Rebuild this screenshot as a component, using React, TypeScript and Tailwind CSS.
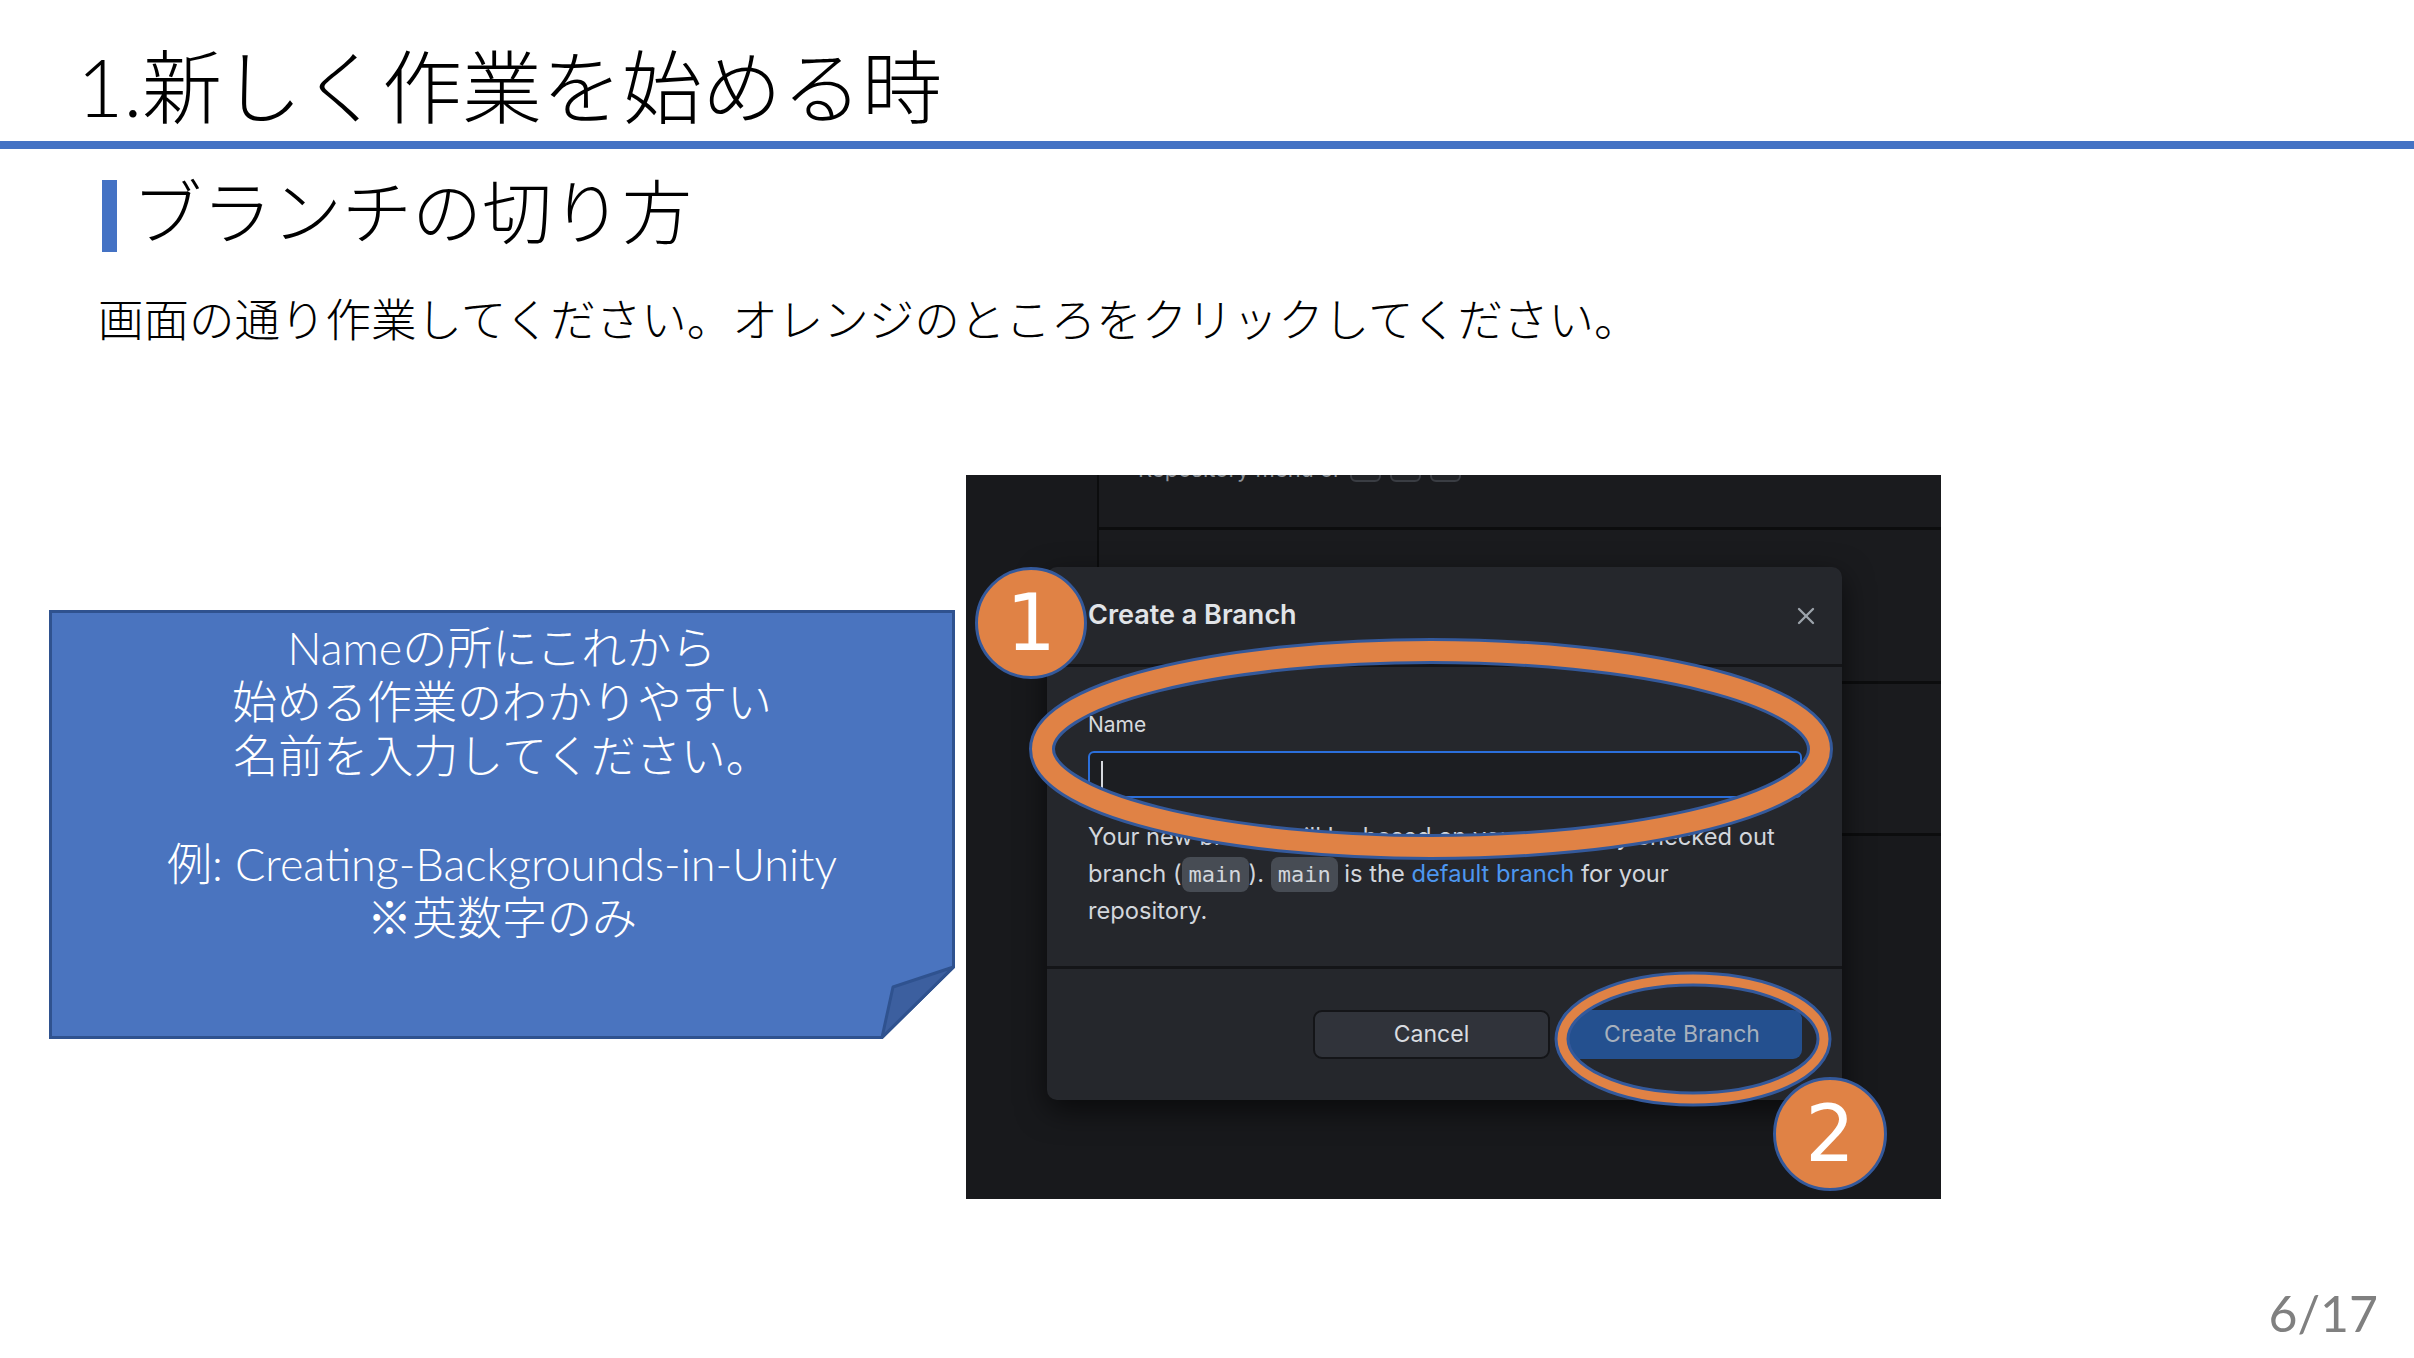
import React from "react";
import { X } from "lucide-react";

function Callout() {
  return (
    <div className="relative mt-[135px] h-[429px] w-[906px] shrink-0">
      <svg className="absolute inset-0" width="906" height="429" viewBox="0 0 906 429">
        <polygon
          points="1.5,1.5 904.5,1.5 904.5,357 833,427.5 1.5,427.5"
          fill="#4a74bf"
          stroke="#2f528f"
          strokeWidth="3"
        />
        <polygon
          points="904.5,357 833,427.5 844,377"
          fill="#3c5f9f"
          stroke="#2f528f"
          strokeWidth="3"
          strokeLinejoin="round"
        />
      </svg>
      <div className="relative pt-[11px] text-center text-[45px] leading-[54px] font-light text-white">
        <p>Nameの所にこれから</p>
        <p>始める作業のわかりやすい</p>
        <p>名前を入力してください。</p>
        <p>&nbsp;</p>
        <p>例: Creating-Backgrounds-in-Unity</p>
        <p>※英数字のみ</p>
      </div>
    </div>
  );
}

function Kbd({ children }: { children: React.ReactNode }) {
  return (
    <span className="inline-flex h-[30px] w-[31px] items-center justify-center rounded-[6px] border-2 border-[#3a3d43] bg-[#222428] text-[18px] text-[#9aa0a7]">
      {children}
    </span>
  );
}

function Modal() {
  return (
    <div className="absolute left-[81px] top-[92px] flex h-[533px] w-[795px] flex-col rounded-[10px] bg-[#25272c] shadow-[0_10px_30px_rgba(0,0,0,0.6)]">
      <div className="flex h-[100px] items-center justify-between border-b-[3px] border-[#141518] pl-[41px] pr-[22px]">
        <h3 className="text-[27px] font-semibold text-[#e1e4e8]">Create a Branch</h3>
        <X size={28} strokeWidth={2} className="text-[#9ca3ab]" />
      </div>
      <div className="h-[302px] border-b-[3px] border-[#141518] pl-[41px] pr-[40px] pt-[45px]">
        <label className="block text-[21px] leading-[26px] text-[#d6d9de]">Name</label>
        <div className="mt-[13px] flex h-[47px] items-center rounded-[6px] border-2 border-[#2b6fdb] bg-[#1c1e22] pl-[11px]">
          <span className="h-[27px] w-[2px] bg-[#d6d9de]" />
        </div>
        <p className="mt-[21px] text-[23.7px] leading-[36.5px] text-[#d2d6dc]">
          Your new branch will be based on your currently checked out
          <br />
          branch (
          <code className="rounded-[8px] bg-[#474c54] px-[7px] py-[5px] font-['DejaVu_Sans_Mono',monospace] text-[22px]">main</code>
          ).{" "}
          <code className="rounded-[8px] bg-[#474c54] px-[7px] py-[5px] font-['DejaVu_Sans_Mono',monospace] text-[22px]">main</code>{" "}
          is the <span className="text-[#4d97f0]">default branch</span> for your
          <br />
          repository.
        </p>
      </div>
      <div className="flex flex-1 items-center justify-end gap-[12px] pr-[40px]">
        <button className="flex h-[49px] w-[237px] items-center justify-center rounded-[9px] border-2 border-[#141518] bg-[#30333a] text-[23px] text-[#d9dce0]">
          Cancel
        </button>
        <button className="flex h-[49px] w-[240px] items-center justify-center rounded-[9px] bg-[#24508f] text-[23px] text-[#a7b1bd]">
          Create Branch
        </button>
      </div>
    </div>
  );
}

function Annotations() {
  return (
    <>
      <svg className="pointer-events-none absolute inset-0" width="975" height="724" viewBox="0 0 975 724">
        <ellipse cx="465" cy="274" rx="389" ry="98" fill="none" stroke="#34599b" strokeWidth="26" />
        <ellipse cx="465" cy="274" rx="389" ry="98" fill="none" stroke="#e08245" strokeWidth="20" />
        <ellipse cx="727" cy="564" rx="131" ry="60" fill="none" stroke="#34599b" strokeWidth="15" />
        <ellipse cx="727" cy="564" rx="131" ry="60" fill="none" stroke="#e08245" strokeWidth="9" />
      </svg>
      <div className="absolute left-[9px] top-[92px] flex h-[112px] w-[112px] items-center justify-center rounded-full border-[3px] border-[#34599b] bg-[#e08245] font-['DejaVu_Sans',sans-serif] text-[78px] leading-none text-white">
        1
      </div>
      <div className="absolute left-[807px] top-[602px] flex h-[114px] w-[114px] items-center justify-center rounded-full border-[3px] border-[#34599b] bg-[#e08245] font-['DejaVu_Sans',sans-serif] text-[78px] leading-none text-white">
        2
      </div>
    </>
  );
}

function Screenshot() {
  return (
    <div className="relative ml-[11px] flex h-[724px] w-[975px] shrink-0 flex-col overflow-hidden bg-[#1a1b1e] font-['Inter',sans-serif]">
      <div className="flex h-[361px]">
        <div className="w-[133px] border-r-2 border-[#0c0d0e] bg-[#18191c]" />
        <div className="flex flex-1 flex-col">
          <div className="h-[55px] overflow-hidden border-b-[3px] border-[#0c0d0e] pl-[39px]">
            <div className="-mt-[23px] flex h-[30px] items-end gap-[9px] text-[22px] leading-[26px] text-[#8d939a]">
              <span>Repository menu or</span>
              <Kbd>⌘</Kbd>
              <Kbd>⇧</Kbd>
              <Kbd>A</Kbd>
            </div>
          </div>
          <div className="h-[154px] border-b-[3px] border-[#0c0d0e]" />
          <div className="h-[152px] border-b-[3px] border-[#0c0d0e]" />
        </div>
      </div>
      <div className="flex-1 bg-[#18191c]" />
      <Modal />
      <Annotations />
    </div>
  );
}

export default function App() {
  return (
    <div className="flex h-[1358px] w-[2414px] flex-col overflow-hidden bg-white font-['Lato','Noto_Sans_CJK_JP',sans-serif] text-black">
      <h1 className="pl-[77px] pt-[38px] text-[80px] font-light leading-[96px]">1.新しく作業を始める時</h1>
      <div className="mt-[7px] h-[8px] bg-[#4472c4]" />
      <div className="mt-[23px] flex items-center pl-[102px]">
        <span className="mt-[8px] h-[72px] w-[15px] bg-[#4472c4]" />
        <h2 className="ml-[15px] text-[70px] font-light leading-[80px]">ブランチの切り方</h2>
      </div>
      <p className="mt-[38px] pl-[98px] text-[45.5px] font-light leading-[60px]">
        画面の通り作業してください。オレンジのところをクリックしてください。
      </p>
      <div className="mt-[125px] flex items-start pl-[49px]">
        <Callout />
        <Screenshot />
      </div>
      <div className="mt-auto flex justify-end pb-[15px] pr-[36px] text-[50px] leading-[60px] text-[#808080]">
        6/17
      </div>
    </div>
  );
}
